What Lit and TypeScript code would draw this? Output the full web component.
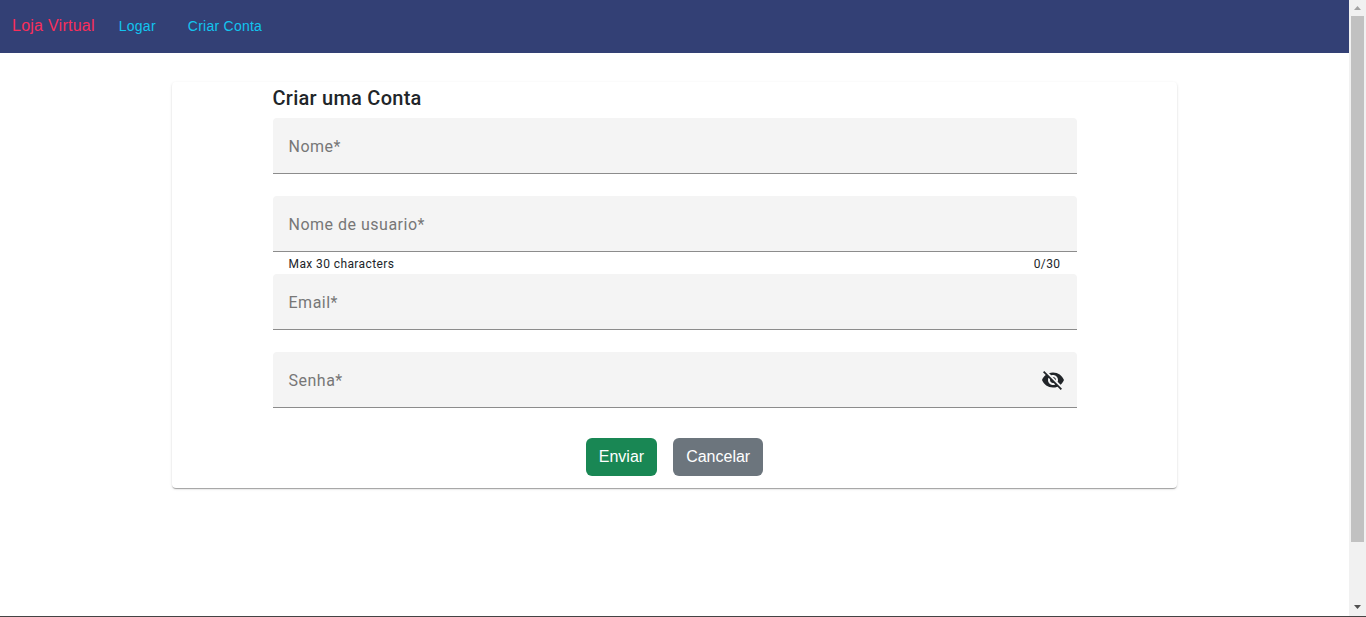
import { LitElement, html, css } from "lit";
import { customElement, property, state } from "lit/decorators.js";

@customElement("form-field")
class FormField extends LitElement {
  @property() label = "";
  @property() name = "";
  @property() type = "text";
  @property() hint = "";
  @property({ type: Number }) max = 0;
  @property({ type: Boolean }) secret = false;
  @state() private value = "";
  @state() private shown = false;

  static styles = css`
    :host {
      display: block;
    }
    .box {
      display: grid;
      grid-template-columns: minmax(0, 1fr) auto;
      height: 56px;
      box-sizing: border-box;
      background: #f4f4f4;
      border-bottom: 1px solid #8c8c8c;
      border-radius: 4px 4px 0 0;
    }
    .label,
    .input {
      grid-area: 1 / 1;
      padding: 2px 16px 0;
      font-family: Roboto, sans-serif;
      font-size: 16px;
      letter-spacing: 0.03125em;
    }
    .label {
      align-self: center;
      line-height: 24px;
      color: #777;
      pointer-events: none;
    }
    .filled {
      align-self: start;
      font-size: 12px;
    }
    .input {
      min-width: 0;
      border: 0;
      outline: 0;
      background: transparent;
      color: #212529;
    }
    .toggle {
      display: flex;
      align-items: center;
      padding: 0 12px;
      border: 0;
      background: none;
      color: #212529;
      cursor: pointer;
    }
    .icon {
      width: 24px;
      height: 24px;
      fill: currentColor;
    }
    .sub {
      display: flex;
      justify-content: space-between;
      min-height: 20px;
      padding: 2px 16px 0;
      font-family: Roboto, sans-serif;
      font-size: 12px;
      line-height: 20px;
      letter-spacing: 0.03333em;
      color: #212529;
    }
  `;

  render() {
    return html`
      <div class="box">
        <input
          id="field"
          class="input"
          name=${this.name}
          type=${this.secret && !this.shown ? "password" : this.type}
          maxlength=${this.max || 200}
          required
          @input=${(e: Event) => (this.value = (e.target as HTMLInputElement).value)}
        />
        <label class="label ${this.value ? "filled" : ""}" for="field">${this.label}*</label>
        ${this.secret
          ? html`<button
              class="toggle"
              type="button"
              aria-label="Mostrar senha"
              @click=${() => (this.shown = !this.shown)}
            >
              <svg class="icon" viewBox="0 0 24 24" aria-hidden="true">
                <path
                  d="M12 7c2.76 0 5 2.24 5 5 0 .65-.13 1.26-.36 1.83l2.92 2.92c1.51-1.26 2.7-2.89 3.43-4.75-1.73-4.39-6-7.5-11-7.5-1.4 0-2.74.25-3.98.7l2.16 2.16C10.74 7.13 11.35 7 12 7zM2 4.27l2.28 2.28.46.46C3.08 8.3 1.78 10.02 1 12c1.73 4.39 6 7.5 11 7.5 1.55 0 3.03-.3 4.38-.84l.42.42L19.73 22 21 20.73 3.27 3 2 4.27zM7.53 9.8l1.55 1.55c-.05.21-.08.43-.08.65 0 1.66 1.34 3 3 3 .22 0 .44-.03.65-.08l1.55 1.55c-.67.33-1.41.53-2.2.53-2.76 0-5-2.24-5-5 0-.79.2-1.53.53-2.2zm4.31-.78l3.15 3.15.02-.16c0-1.66-1.34-3-3-3l-.17.01z"
                />
              </svg>
            </button>`
          : ""}
      </div>
      <div class="sub">
        <span>${this.hint}</span>
        ${this.max ? html`<span>${this.value.length}/${this.max}</span>` : ""}
      </div>
    `;
  }
}

@customElement("app-root")
class AppRoot extends LitElement {
  static styles = css`
    :host {
      display: flex;
      height: 100vh;
      box-sizing: border-box;
      border-bottom: 1px solid #444;
      background: #fff;
      font-family: "Liberation Sans", Arial, sans-serif;
      color: #212529;
    }
    .page {
      flex: 1;
      min-width: 0;
    }
    .nav {
      display: flex;
      align-items: center;
      gap: 8px;
      height: 53px;
      padding: 0 12px 2px;
      box-sizing: border-box;
      background: #334075;
      font-size: 20px;
      letter-spacing: 0.0125em;
    }
    .links {
      display: flex;
    }
    .brand {
      font-size: 16px;
      line-height: 24px;
      color: #f92e5b;
      text-decoration: none;
    }
    .link {
      padding: 0 16px;
      font-size: 14px;
      line-height: 24px;
      color: #12c4ef;
      text-decoration: none;
    }
    .card {
      width: 74.5%;
      box-sizing: border-box;
      margin: 29px auto 0;
      padding-bottom: 12px;
      border-radius: 4px;
      box-shadow:
        0 2px 1px -1px rgba(0, 0, 0, 0.2),
        0 1px 1px 0 rgba(0, 0, 0, 0.14),
        0 1px 3px 0 rgba(0, 0, 0, 0.12);
    }
    .form {
      width: 80%;
      margin: 0 auto;
    }
    .title {
      margin: 0;
      padding-bottom: 4px;
      font-family: Roboto, sans-serif;
      font-size: 20px;
      font-weight: 500;
      line-height: 32px;
      letter-spacing: 0.0125em;
    }
    .actions {
      display: flex;
      justify-content: center;
      gap: 16px;
      padding-top: 8px;
    }
    .btn {
      padding: 7px 13px;
      border: 0;
      border-radius: 6px;
      font-family: inherit;
      font-size: 16px;
      line-height: 24px;
      color: #fff;
      cursor: pointer;
    }
    .send {
      background: #198754;
    }
    .cancel {
      background: #6c757d;
    }
    .scroll {
      display: flex;
      flex-direction: column;
      align-items: center;
      width: 17px;
      background: #f1f1f1;
    }
    .arrow {
      width: 17px;
      height: 16px;
    }
    .up {
      fill: #a3a3a3;
    }
    .down {
      fill: #505050;
    }
    .track {
      flex: 1;
      width: 13px;
    }
    .thumb {
      height: 90%;
      background: #c1c1c1;
    }
  `;

  render() {
    return html`
      <div class="page">
        <nav class="nav">
          <a class="brand" href="#">Loja Virtual</a>
          <div class="links">
            <a class="link" href="#logar">Logar</a>
            <a class="link" href="#criar">Criar Conta</a>
          </div>
        </nav>
        <main class="card">
          <form class="form" @submit=${(e: Event) => e.preventDefault()}>
            <h1 class="title">Criar uma Conta</h1>
            <form-field label="Nome" name="nome"></form-field>
            <form-field label="Nome de usuario" name="usuario" hint="Max 30 characters" max="30"></form-field>
            <form-field label="Email" name="email" type="email"></form-field>
            <form-field label="Senha" name="senha" secret></form-field>
            <div class="actions">
              <button class="btn send" type="submit">Enviar</button>
              <button class="btn cancel" type="button">Cancelar</button>
            </div>
          </form>
        </main>
      </div>
      <div class="scroll" aria-hidden="true">
        <svg class="arrow up" viewBox="0 0 17 16"><path d="M5 10h7L8.500 6z" /></svg>
        <div class="track"><div class="thumb"></div></div>
        <svg class="arrow down" viewBox="0 0 17 16"><path d="M5 5h7L8.500 9z" /></svg>
      </div>
    `;
  }
}
